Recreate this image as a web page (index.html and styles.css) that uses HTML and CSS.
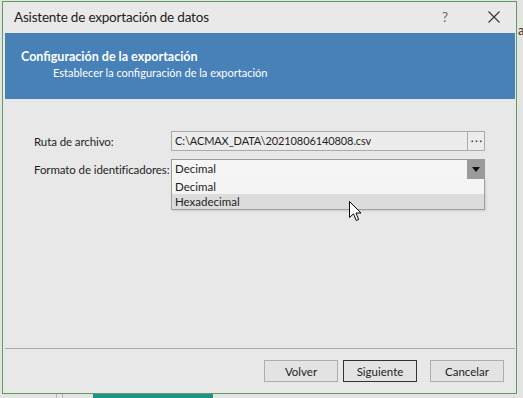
FILE: index.html
```html
<!DOCTYPE html>
<html lang="es">
<head>
  <meta charset="UTF-8" />
  <title>Asistente de exportación de datos</title>
  <link rel="stylesheet" href="styles.css">
</head>
<body>
  <div class="behind-right">a</div>
  <div class="dialog">
    <div class="titlebar">
      <span class="title">Asistente de exportación de datos</span>
      <span class="help">?</span>
      <span class="close">
        <svg width="12" height="12" viewBox="0 0 12 12"><path d="M0.5 0.5 L11.5 11.5 M11.5 0.5 L0.5 11.5" stroke="#333" stroke-width="1.1" fill="none"/></svg>
      </span>
    </div>

    <div class="banner">
      <div class="banner-title">Configuración de la exportación</div>
      <div class="banner-sub">Establecer la configuración de la exportación</div>
    </div>

    <div class="content">
      <div class="row">
        <label class="label">Ruta de archivo:</label>
        <div class="textbox">
          <span class="value">C:\ACMAX_DATA\20210806140808.csv</span>
          <span class="ellipsis">
            <svg width="11" height="3" viewBox="0 0 11 3"><rect x="0.5" y="0.5" width="1.6" height="1.6" fill="#444"/><rect x="4.7" y="0.5" width="1.6" height="1.6" fill="#444"/><rect x="8.9" y="0.5" width="1.6" height="1.6" fill="#444"/></svg>
          </span>
        </div>
      </div>
      <div class="row">
        <label class="label">Formato de identificadores:</label>
        <div class="combo">
          <span class="value">Decimal</span>
          <span class="arrow">
            <svg width="8" height="5" viewBox="0 0 8 5"><path d="M0 0 L8 0 L4 5 Z" fill="#111"/></svg>
          </span>
          <div class="dropdown">
            <div class="option">Decimal</div>
            <div class="option selected">Hexadecimal</div>
          </div>
        </div>
      </div>
      <!-- mouse pointer -->
      <svg class="cursor" width="13" height="21" viewBox="0 0 13 21">
        <path d="M0.5 0.5 L0.5 16.5 L4.5 12.8 L7.2 19.5 L9.6 18.5 L7 12 L12 12 Z" fill="#fff" stroke="#000" stroke-width="1"/>
      </svg>
    </div>

    <div class="footer">
      <button class="btn">Volver</button>
      <button class="btn default">Siguiente</button>
      <button class="btn cancel">Cancelar</button>
    </div>
  </div>
  <div class="taskbar">
    <span class="tick"></span>
    <span class="tick"></span>
    <span class="teal"></span>
  </div>
</body>
</html>
```

FILE: styles.css
```css
* { margin: 0; padding: 0; box-sizing: border-box; }
body {
  width: 523px;
  height: 398px;
  overflow: hidden;
  background: #e4e4e4;
  font-family: Lato, "Noto Sans", sans-serif;
  font-size: 11.5px;
  color: #1e1e1e;
  position: relative;
}

.behind-right {
  position: absolute;
  left: 518px;
  top: 22px;
  width: 5px;
  overflow: hidden;
  font-size: 13px;
  color: #333;
}

.dialog {
  margin: 1px 0 0 2px;
  width: 515px;
  height: 393px;
  border: 1px solid #5c9e5c;
  background: #e8e8e8;
  display: flex;
  flex-direction: column;
  position: relative;
}

.titlebar {
  height: 31px;
  display: flex;
  align-items: center;
  padding-left: 11px;
  padding-bottom: 1px;
  background: #e9e9e9;
}
.title {
  flex: 1;
  font-size: 13.5px;
  letter-spacing: -0.2px;
  color: #222;
}
.help {
  width: 46px;
  font-size: 13.5px;
  color: #666;
}
.close {
  width: 28px;
  display: flex;
  align-items: center;
}

.banner {
  margin: 0 1px 0 2px;
  height: 66px;
  background: #4781b7;
  color: #fff;
  padding: 16px 0 0 16px;
}
.banner-title {
  font-weight: bold;
  font-size: 12.5px;
  line-height: 16px;
}
.banner-sub {
  padding-left: 32px;
  font-size: 11px;
  line-height: 16px;
}

.content {
  flex: 1;
  padding: 32px 0 0 31px;
  display: flex;
  flex-direction: column;
  gap: 8px;
  position: relative;
}
.row {
  display: flex;
  align-items: center;
}
.label {
  width: 137px;
  white-space: nowrap;
  letter-spacing: -0.1px;
}

.textbox, .combo {
  width: 314px;
  display: flex;
  align-items: stretch;
  border: 1px solid #a9a9a9;
  position: relative;
}
.textbox {
  height: 20px;
  background: #ececec;
}
.combo {
  height: 21px;
  background: #f5f5f5;
  border-color: #9a9a9a;
}
.value {
  flex: 1;
  padding-left: 3px;
  line-height: 18px;
}
.textbox .value {
  font-size: 11px;
  letter-spacing: -0.1px;
}
.ellipsis {
  width: 17px;
  border-left: 1px solid #a9a9a9;
  display: flex;
  align-items: center;
  justify-content: center;
}
.arrow {
  width: 17px;
  background: #9b9b9b;
  display: flex;
  align-items: center;
  justify-content: center;
}

.dropdown {
  position: absolute;
  left: -1px;
  top: 19px;
  width: 314px;
  border: 1px solid #a0a0a0;
  border-top: none;
  background: #f4f4f4;
  box-shadow: 1px 1px 2px rgba(0, 0, 0, 0.12);
}
.option {
  height: 15px;
  line-height: 15px;
  padding-left: 3px;
}
.option.selected {
  background: #dcdcdc;
}

.cursor {
  position: absolute;
  left: 346px;
  top: 102px;
}

.footer {
  margin: 0 1px 0 2px;
  height: 45px;
  border-top: 1px solid #a9a9a9;
  display: flex;
  justify-content: flex-end;
  align-items: flex-start;
  padding: 11px 11px 0 0;
  gap: 5px;
}
.btn {
  width: 74px;
  height: 22px;
  border: 1px solid #adadad;
  background: #e3e3e3;
  font-family: Lato, "Noto Sans", sans-serif;
  font-size: 11.5px;
  color: #222;
}
.btn.default {
  border-color: #333;
}
.btn.cancel {
  margin-left: 8px;
}

.taskbar {
  display: flex;
  height: 5px;
}
.tick {
  width: 1px;
  background: #b5b5b5;
  margin-left: 5px;
}
.tick:first-child {
  margin-left: 56px;
}
.teal {
  width: 120px;
  margin-left: 30px;
  background: #1e9487;
}
```
